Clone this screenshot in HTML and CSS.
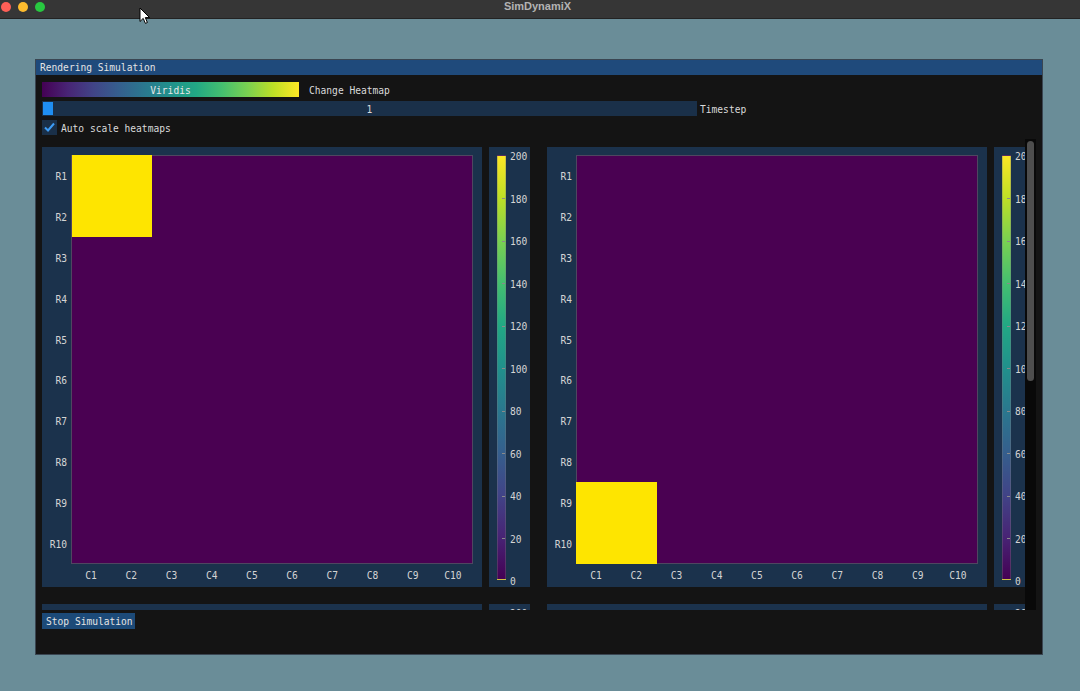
FILE: index.html
```html
<!DOCTYPE html>
<html>
<head>
<meta charset="utf-8">
<title>SimDynamiX</title>
<link rel="stylesheet" href="styles.css">
</head>
<body>
<div class="mac-titlebar">
  <div class="lights">
    <span class="light red"></span>
    <span class="light yellow"></span>
    <span class="light green"></span>
  </div>
  <div class="mac-title">SimDynamiX</div>
</div>
<div class="desktop">
  <div class="imgui-window">
    <div class="win-title">Rendering Simulation</div>
    <div class="win-body">
      <div class="row">
        <div class="combo">Viridis</div>
        <span class="label label-combo">Change Heatmap</span>
      </div>
      <div class="row">
        <div class="slider"><div class="grab"></div><span class="slider-val">1</span></div>
        <span class="label label-slider">Timestep</span>
      </div>
      <div class="row">
        <div class="checkbox">
          <svg width="15" height="15" viewBox="0 0 15 15"><path d="M3 7.5 L6 10.5 L12 3.5" fill="none" stroke="#3d9cf5" stroke-width="2"/></svg>
        </div>
        <span class="label label-check">Auto scale heatmaps</span>
      </div>
      <div class="scroll-region">
        <div class="scroll-content">
          <div class="heat-row">
            <div class="pair">
              <div class="plot">
                <div class="row-labels"><span>R1</span><span>R2</span><span>R3</span><span>R4</span><span>R5</span><span>R6</span><span>R7</span><span>R8</span><span>R9</span><span>R10</span></div>
                <div class="heat"><div class="hot hot-tl"></div></div>
                <div class="col-labels"><span>C1</span><span>C2</span><span>C3</span><span>C4</span><span>C5</span><span>C6</span><span>C7</span><span>C8</span><span>C9</span><span>C10</span></div>
              </div>
              <div class="colorbar">
                <div class="cbar"></div>
                <div class="cticks"><span class="nt">200</span><span>180</span><span>160</span><span>140</span><span>120</span><span>100</span><span>80</span><span>60</span><span>40</span><span>20</span><span class="nt">0</span></div>
              </div>
            </div>
            <div class="pair">
              <div class="plot">
                <div class="row-labels"><span>R1</span><span>R2</span><span>R3</span><span>R4</span><span>R5</span><span>R6</span><span>R7</span><span>R8</span><span>R9</span><span>R10</span></div>
                <div class="heat"><div class="hot hot-bl"></div></div>
                <div class="col-labels"><span>C1</span><span>C2</span><span>C3</span><span>C4</span><span>C5</span><span>C6</span><span>C7</span><span>C8</span><span>C9</span><span>C10</span></div>
              </div>
              <div class="colorbar">
                <div class="cbar"></div>
                <div class="cticks"><span class="nt">200</span><span>180</span><span>160</span><span>140</span><span>120</span><span>100</span><span>80</span><span>60</span><span>40</span><span>20</span><span class="nt">0</span></div>
              </div>
            </div>
          </div>
          <div class="heat-row">
            <div class="pair">
              <div class="plot">
                <div class="row-labels"><span>R1</span><span>R2</span><span>R3</span><span>R4</span><span>R5</span><span>R6</span><span>R7</span><span>R8</span><span>R9</span><span>R10</span></div>
                <div class="heat"></div>
                <div class="col-labels"><span>C1</span><span>C2</span><span>C3</span><span>C4</span><span>C5</span><span>C6</span><span>C7</span><span>C8</span><span>C9</span><span>C10</span></div>
              </div>
              <div class="colorbar">
                <div class="cbar"></div>
                <div class="cticks"><span class="nt">200</span><span>180</span><span>160</span><span>140</span><span>120</span><span>100</span><span>80</span><span>60</span><span>40</span><span>20</span><span class="nt">0</span></div>
              </div>
            </div>
            <div class="pair">
              <div class="plot">
                <div class="row-labels"><span>R1</span><span>R2</span><span>R3</span><span>R4</span><span>R5</span><span>R6</span><span>R7</span><span>R8</span><span>R9</span><span>R10</span></div>
                <div class="heat"></div>
                <div class="col-labels"><span>C1</span><span>C2</span><span>C3</span><span>C4</span><span>C5</span><span>C6</span><span>C7</span><span>C8</span><span>C9</span><span>C10</span></div>
              </div>
              <div class="colorbar">
                <div class="cbar"></div>
                <div class="cticks"><span class="nt">200</span><span>180</span><span>160</span><span>140</span><span>120</span><span>100</span><span>80</span><span>60</span><span>40</span><span>20</span><span class="nt">0</span></div>
              </div>
            </div>
          </div>
        </div>
        <div class="scrollbar"><div class="scroll-grab"></div></div>
      </div>
      <div class="btn">Stop Simulation</div>
    </div>
  </div>
</div>
<svg class="cursor" width="12" height="18" viewBox="0 0 12 18">
  <path d="M1 1 L1 14.5 L4.2 11.4 L6.4 16.4 L8.4 15.5 L6.3 10.6 L10.6 10.6 Z" fill="#ffffff" stroke="#000000" stroke-width="1" stroke-linejoin="round"/>
</svg>
</body>
</html>
```

FILE: styles.css
```css
* { box-sizing: border-box; }

html, body {
  margin: 0;
  padding: 0;
  width: 1080px;
  height: 691px;
  overflow: hidden;
  background: #6a8d98;
}

body {
  position: relative;
  font-family: "DejaVu Sans Mono", "Liberation Mono", monospace;
  font-size: 9.6px;
  color: #dadada;
}

/* macOS title bar */
.mac-titlebar {
  height: 19px;
  background: #363636;
  border-bottom: 1px solid #232323;
  display: flex;
  align-items: center;
  position: relative;
}
.lights {
  display: flex;
  gap: 7px;
  padding-left: 1px;
  margin-top: -5px;
}
.light {
  width: 10px;
  height: 10px;
  border-radius: 50%;
  display: block;
}
.light.red { background: #fe5f57; }
.light.yellow { background: #febc2e; }
.light.green { background: #28c840; }
.mac-title {
  flex: 1;
  text-align: center;
  margin-left: -50px;
  margin-top: -7px;
  font-family: "Liberation Sans", Arial, sans-serif;
  font-weight: bold;
  font-size: 11px;
  color: #b3b3b3;
}

/* desktop */
.desktop {
  padding: 40px 0 0 35px;
}

.imgui-window {
  width: 1008px;
  height: 596px;
  border: 1px solid #3a4652;
  background: #141414;
  display: flex;
  flex-direction: column;
}
.win-title {
  height: 15px;
  background: #1f4a7b;
  color: #e4e4e4;
  padding: 1px 0 0 4px;
  line-height: 14px;
}
.win-body {
  flex: 1;
  padding: 7px 6px 0 6px;
  display: flex;
  flex-direction: column;
  gap: 4px;
}

.row {
  display: flex;
  align-items: center;
  height: 15px;
}
.label { line-height: 15px; padding-top: 2px; }
.label-combo { margin-left: 10px; }
.label-slider { margin-left: 3px; }
.label-check { margin-left: 4px; }

.combo {
  width: 257px;
  height: 15px;
  line-height: 15px;
  padding-top: 1px;
  text-align: center;
  color: #e8e8e8;
  background: linear-gradient(90deg, #440154 0%, #482475 10%, #414487 20%, #355f8d 30%, #2a788e 40%, #21918c 50%, #22a884 60%, #44bf70 70%, #7ad151 80%, #bddf26 90%, #fde725 100%);
}

.slider {
  width: 655px;
  height: 15px;
  background: #1a3049;
  position: relative;
  display: flex;
  align-items: center;
  justify-content: center;
  padding: 2px 1px 0 1px;
}
.grab {
  position: absolute;
  left: 1px;
  top: 1px;
  width: 10px;
  height: 13px;
  background: #1f8ef1;
}
.slider-val { line-height: 13px; }

.checkbox {
  width: 15px;
  height: 15px;
  background: #1a3049;
}
.checkbox svg { display: block; }

/* scroll region */
.scroll-region {
  height: 471px;
  display: flex;
}
.scroll-content {
  flex: 1;
  overflow: hidden;
  padding-top: 8px;
  display: flex;
  flex-direction: column;
  gap: 17px;
}
.heat-row {
  display: flex;
  gap: 17px;
  flex-shrink: 0;
}
.pair {
  display: flex;
  gap: 7px;
  flex-shrink: 0;
}

.plot {
  width: 440px;
  height: 440px;
  background: #1b324c;
  padding: 8px 9px 0 0;
  display: grid;
  grid-template-columns: 29px 402px;
  grid-template-rows: 409px 23px;
  color: #d4d4d4;
}
.row-labels {
  display: flex;
  flex-direction: column;
}
.row-labels span {
  flex: 1;
  display: flex;
  align-items: center;
  justify-content: flex-end;
  padding: 2px 4px 0 0;
}
.heat {
  background: #4a0152;
  border: 1px solid #4f4660;
  display: grid;
  grid-template-columns: repeat(10, 1fr);
  grid-template-rows: repeat(10, 1fr);
}
.hot { background: #fee500; }
.hot-tl { grid-column: 1 / 3; grid-row: 1 / 3; margin: -1px 0 0 0; }
.hot-bl { grid-column: 1 / 3; grid-row: 9 / 11; margin: 0 0 -1px -1px; }
.col-labels {
  grid-column: 2;
  display: grid;
  grid-template-columns: repeat(10, 1fr);
  justify-items: center;
  align-items: center;
  padding-bottom: 1px;
}

.colorbar {
  width: 41px;
  height: 440px;
  background: #1b324c;
  padding: 8px 0 0 8px;
  display: flex;
  flex-shrink: 0;
  color: #d4d4d4;
}
.cbar {
  width: 9px;
  height: 425px;
  background: linear-gradient(0deg, #440154 0%, #482475 10%, #414487 20%, #355f8d 30%, #2a788e 40%, #21918c 50%, #22a884 60%, #44bf70 70%, #7ad151 80%, #bddf26 90%, #fde725 100%);
  border: 1px solid rgba(120,120,120,0.35);
}
.cticks {
  margin: -3px 0 -7px 4px;
  height: 435px;
  display: flex;
  flex-direction: column;
  justify-content: space-between;
}
.cticks span {
  line-height: 10px;
  height: 10px;
  display: flex;
  align-items: center;
}
.cticks span::before {
  content: "";
  width: 3px;
  height: 1px;
  background: #8a8a8a;
  margin-left: -8px;
  margin-right: 5px;
  position: relative;
  top: -1px;
}
.cticks span.nt::before { background: transparent; }

.scrollbar {
  width: 11px;
  background: #090909;
  padding: 2px 2px 0 2px;
}
.scroll-grab {
  height: 240px;
  background: #4e4e4e;
  border-radius: 4px;
}

.btn {
  margin-top: -1px;
  width: 93px;
  height: 16px;
  line-height: 16px;
  padding: 1px 0 0 4px;
  background: #1c4a78;
  color: #e4e4e4;
}

.cursor {
  position: absolute;
  left: 139px;
  top: 7px;
}
```
